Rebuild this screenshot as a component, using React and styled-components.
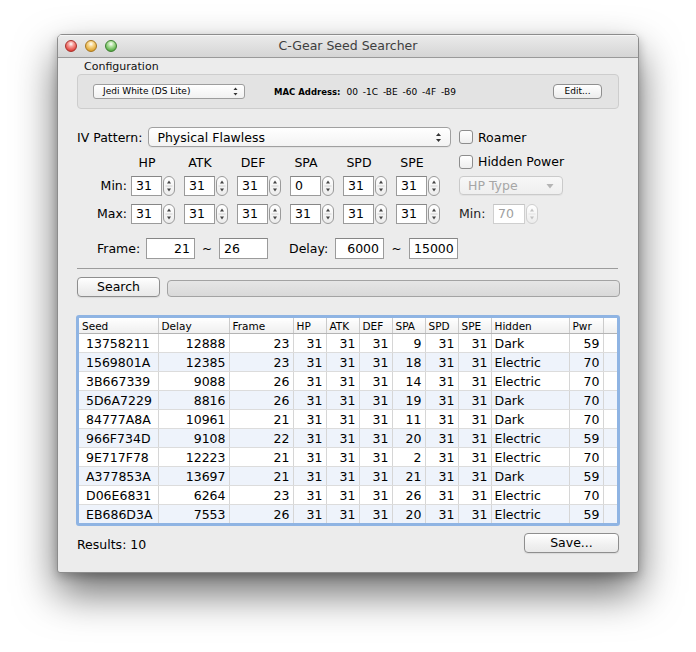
import React from 'react';
import styled, { createGlobalStyle } from 'styled-components';

const Global = createGlobalStyle`
  html, body { margin: 0; padding: 0; background: #ffffff; }
  body { font-family: "DejaVu Sans", "Noto Sans", sans-serif; color: #000; }
  #root { width: 696px; height: 652px; overflow: hidden; }
`;

const Window = styled.div`
  position: relative;
  margin: 34px 0 0 57px;
  width: 582px;
  height: 539px;
  box-sizing: border-box;
  background: #ececec;
  border: 1px solid #8c8c8c;
  border-radius: 5px 5px 3px 3px;
  box-shadow: 0 20px 42px rgba(0,0,0,0.58), 0 4px 10px rgba(0,0,0,0.22);
  display: flex;
  flex-direction: column;
  overflow: hidden;
`;

const TitleBar = styled.div`
  height: 22px;
  flex: 0 0 22px;
  display: flex;
  align-items: center;
  position: relative;
  background: linear-gradient(#ebebeb, #d5d5d5);
  border-bottom: 1px solid #9a9a9a;
  box-shadow: inset 0 1px 0 #f6f6f6;
`;

const Lights = styled.div`
  display: flex;
  gap: 8px;
  margin-left: 7px;
`;

const Light = styled.div`
  width: 12px;
  height: 12px;
  border-radius: 50%;
  box-sizing: border-box;
  border: 1px solid ${p => p.$edge};
  background: radial-gradient(circle at 50% 30%, #ffffff 0%, ${p => p.$light} 30%, ${p => p.$color} 75%, ${p => p.$edge} 100%);
`;

const Title = styled.div`
  position: absolute;
  left: 0; right: 0; top: 0; bottom: 0;
  text-align: center;
  font-size: 12.5px;
  line-height: 22px;
  color: #3e3e3e;
  pointer-events: none;
`;

const Content = styled.div`
  flex: 1;
  padding: 0 19px 0 19px;
  display: flex;
  flex-direction: column;
`;

const GroupLabel = styled.div`
  font-size: 11px;
  line-height: 14px;
  margin: 2px 0 0 7px;
  color: #111;
`;

const GroupBox = styled.div`
  margin-top: 0;
  height: 35px;
  box-sizing: border-box;
  border: 1px solid #cdcdcd;
  border-radius: 4px;
  background: #e3e3e3;
  display: flex;
  align-items: center;
  padding: 0 16px 0 15px;
`;

const MiniPopup = styled.div`
  width: 152px;
  height: 15px;
  box-sizing: border-box;
  border: 1px solid #9d9d9d;
  border-radius: 3px;
  background: linear-gradient(#ffffff, #f1f1f1);
  font-size: 9px;
  line-height: 13px;
  padding-left: 9px;
  display: flex;
  align-items: center;
  justify-content: space-between;
  padding-right: 6px;
`;

const MacLabel = styled.span`
  font-size: 8.5px;
  font-weight: bold;
  margin-left: 29px;
`;

const MacValue = styled.span`
  font-size: 9px;
  word-spacing: 2px;
  margin-left: 6px;
  flex: 1;
`;

const MiniButton = styled.div`
  width: 49px;
  height: 15px;
  box-sizing: border-box;
  border: 1px solid #8f8f8f;
  border-radius: 4px;
  background: linear-gradient(#ffffff, #ececec);
  font-size: 9px;
  line-height: 13px;
  text-align: center;
`;

const IVArea = styled.div`
  margin-top: 18px;
  display: grid;
  grid-template-columns: 374px 160px;
  column-gap: 8px;
`;

const LeftCol = styled.div`
  display: flex;
  flex-direction: column;
`;

const PatternRow = styled.div`
  display: flex;
  align-items: center;
  height: 20px;
`;

const Label = styled.span`
  font-size: 12.5px;
  white-space: nowrap;
  width: ${p => (p.$w ? `${p.$w}px` : 'auto')};
  flex: none;
`;

const Popup = styled.div`
  margin-left: ${p => p.$ml || 0}px;
  width: ${p => p.$w}px;
  height: ${p => p.$h || 20}px;
  box-sizing: border-box;
  border: 1px solid ${p => (p.$disabled ? '#cacaca' : '#a0a0a0')};
  border-radius: 4px;
  background: ${p => (p.$disabled ? 'linear-gradient(#f7f7f7, #efefef)' : 'linear-gradient(#ffffff, #f3f3f3)')};
  box-shadow: 0 1px 0 rgba(0,0,0,0.04);
  display: flex;
  align-items: center;
  justify-content: space-between;
  padding: 0 8px 0 8px;
  font-size: 12.5px;
  color: ${p => (p.$disabled ? '#a6a6a6' : '#000')};
`;

const StatGrid = styled.div`
  display: grid;
  grid-template-columns: 45px repeat(6, 44px);
  grid-template-rows: 29px 20px 28px;
  column-gap: 9px;
`;

const StatHeader = styled.div`
  font-size: 12.5px;
  text-align: center;
  align-self: center;
  padding-right: 12px;
  padding-top: 1px;
`;

const RowLabel = styled.div`
  font-size: 12.5px;
  text-align: right;
  align-self: ${p => (p.$end ? 'end' : 'center')};
  line-height: 20px;
  margin-right: -5px;
`;

const SpinGroup = styled.div`
  display: flex;
  gap: 1px;
  align-self: ${p => (p.$end ? 'end' : 'stretch')};
`;

const Field = styled.div`
  width: ${p => p.$w || 31}px;
  height: ${p => p.$h || 20}px;
  flex: none;
  box-sizing: border-box;
  background: #fff;
  border: 1px solid ${p => (p.$disabled ? '#cfcfcf' : '#9b9b9b')};
  border-top-color: ${p => (p.$disabled ? '#c4c4c4' : '#868686')};
  font-size: 12.5px;
  line-height: ${p => (p.$h || 20) - 2}px;
  padding: 0 4px;
  text-align: ${p => (p.$right ? 'right' : 'left')};
  color: ${p => (p.$disabled ? '#a0a0a0' : '#000')};
`;

const StepperBox = styled.div`
  width: 12px;
  height: 20px;
  box-sizing: border-box;
  border: 1px solid ${p => (p.$disabled ? '#cfcfcf' : '#9a9a9a')};
  border-radius: 6px;
  background: linear-gradient(#ffffff, #ececec);
  display: flex;
  align-items: center;
  justify-content: center;
`;

const Stepper = ({ disabled }) => (
  <StepperBox $disabled={disabled}>
    <svg width="10" height="18" viewBox="0 0 10 18">
      <path d="M5 3.5 L7 6.5 L3 6.5 Z" fill={disabled ? '#c2c2c2' : '#444'} />
      <path d="M1.5 9 L8.5 9" stroke={disabled ? '#e3e3e3' : '#d2d2d2'} strokeWidth="1" />
      <path d="M5 14.5 L7 11.5 L3 11.5 Z" fill={disabled ? '#c2c2c2' : '#444'} />
    </svg>
  </StepperBox>
);

const Spin = ({ value, end }) => (
  <SpinGroup $end={end}>
    <Field>{value}</Field>
    <Stepper />
  </SpinGroup>
);

const RightCol = styled.div`
  display: grid;
  grid-template-rows: 20px 29px 20px 28px;
`;

const CheckRow = styled.div`
  display: flex;
  align-items: center;
  gap: 5px;
`;

const Check = styled.div`
  width: 14px;
  height: 14px;
  box-sizing: border-box;
  border: 1px solid #8d8d8d;
  border-radius: 3px;
  background: linear-gradient(#ffffff, #eeeeee);
`;

const MinRow = styled.div`
  display: flex;
  align-items: flex-end;
  gap: 1px;
`;

const MinLabel = styled.span`
  font-size: 12.5px;
  line-height: 20px;
  width: 33px;
  color: #222;
`;

const FrameRow = styled.div`
  margin-top: 14px;
  display: flex;
  align-items: center;
  padding-left: 20px;
  height: 21px;
`;

const Tilde = styled.span`
  font-size: 12px;
  width: ${p => p.$w}px;
  text-align: center;
  flex: none;
`;

const Separator = styled.div`
  margin-top: 9px;
  height: 1px;
  background: #9c9c9c;
  margin-right: 1px;
`;

const SearchRow = styled.div`
  margin-top: 8px;
  display: flex;
  align-items: center;
  gap: 7px;
  height: 20px;
`;

const PushButton = styled.div`
  width: ${p => p.$w}px;
  height: 20px;
  box-sizing: border-box;
  border: 1px solid #8e8e8e;
  border-radius: 4px;
  background: linear-gradient(#ffffff, #f0f0f0 60%, #e9e9e9);
  box-shadow: 0 1px 1px rgba(0,0,0,0.08);
  font-size: 12.5px;
  line-height: 18px;
  text-align: center;
`;

const Progress = styled.div`
  flex: 1;
  height: 17px;
  margin-top: 3px;
  box-sizing: border-box;
  border: 1px solid #a3a3a3;
  border-radius: 4px;
  background: linear-gradient(#e6e6e6, #d9d9d9);
  margin-right: -1px;
`;

const TableFrame = styled.div`
  margin: 18px -1px 0 -1px;
  height: 211px;
  box-sizing: border-box;
  border: 3px solid #8fb4e3;
  border-radius: 3px;
  background: #fff;
  overflow: hidden;
`;

const Table = styled.table`
  width: 538px;
  table-layout: fixed;
  border-collapse: collapse;
`;

const Th = styled.th`
  height: 15px;
  padding: 0 0 0 3px;
  font-size: 10.5px;
  font-weight: normal;
  text-align: left;
  background: linear-gradient(#ffffff, #efefef);
  border-bottom: 1px solid #b4b4b4;
  border-right: 1px solid #cbcbcb;
  white-space: nowrap;
  overflow: hidden;
  &:last-child { border-right: none; }
`;

const Tr = styled.tr`
  background: ${p => (p.$alt ? '#eef3fb' : '#ffffff')};
`;

const Td = styled.td`
  height: 16px;
  padding: 2px ${p => (p.$left ? 0 : 3)}px 0 ${p => (p.$left ? p.$pl : 0)}px;
  font-size: 12.5px;
  line-height: 16px;
  text-align: ${p => (p.$left ? 'left' : 'right')};
  border-right: 1px solid #d6d6d6;
  border-bottom: 1px solid #dcdcdc;
  white-space: nowrap;
  overflow: hidden;
  &:last-child { border-right: none; }
`;

const Footer = styled.div`
  margin-top: 7px;
  display: flex;
  align-items: center;
  justify-content: space-between;
  height: 20px;
`;

const ResultText = styled.span`
  font-size: 12.5px;
  margin-top: 2px;
`;

const DoubleArrow = ({ color = '#333' }) => (
  <svg width="7" height="11" viewBox="0 0 7 11">
    <path d="M3.5 1 L6 4 L1 4 Z" fill={color} />
    <path d="M3.5 10 L6 7 L1 7 Z" fill={color} />
  </svg>
);

const MiniArrow = () => (
  <svg width="5" height="9" viewBox="0 0 5 9">
    <path d="M2.5 0.5 L4.5 3 L0.5 3 Z" fill="#333" />
    <path d="M2.5 8.5 L4.5 6 L0.5 6 Z" fill="#333" />
  </svg>
);

const DownArrow = () => (
  <svg width="8" height="6" viewBox="0 0 8 6">
    <path d="M0.5 1 L7.5 1 L4 5.5 Z" fill="#b5b5b5" />
  </svg>
);

const cols = [
  { name: 'Seed', w: 79, left: true, pl: 7 },
  { name: 'Delay', w: 71 },
  { name: 'Frame', w: 64 },
  { name: 'HP', w: 33 },
  { name: 'ATK', w: 33 },
  { name: 'DEF', w: 33 },
  { name: 'SPA', w: 33 },
  { name: 'SPD', w: 33 },
  { name: 'SPE', w: 33 },
  { name: 'Hidden', w: 78, left: true, pl: 3 },
  { name: 'Pwr', w: 34 },
  { name: '', w: 14 },
];

const rows = [
  ['13758211', 12888, 23, 31, 31, 31, 9, 31, 31, 'Dark', 59],
  ['1569801A', 12385, 23, 31, 31, 31, 18, 31, 31, 'Electric', 70],
  ['3B667339', 9088, 26, 31, 31, 31, 14, 31, 31, 'Electric', 70],
  ['5D6A7229', 8816, 26, 31, 31, 31, 19, 31, 31, 'Dark', 70],
  ['84777A8A', 10961, 21, 31, 31, 31, 11, 31, 31, 'Dark', 70],
  ['966F734D', 9108, 22, 31, 31, 31, 20, 31, 31, 'Electric', 59],
  ['9E717F78', 12223, 21, 31, 31, 31, 2, 31, 31, 'Electric', 70],
  ['A377853A', 13697, 21, 31, 31, 31, 21, 31, 31, 'Dark', 59],
  ['D06E6831', 6264, 23, 31, 31, 31, 26, 31, 31, 'Electric', 70],
  ['EB686D3A', 7553, 26, 31, 31, 31, 20, 31, 31, 'Electric', 59],
];

const stats = ['HP', 'ATK', 'DEF', 'SPA', 'SPD', 'SPE'];
const minVals = ['31', '31', '31', '0', '31', '31'];
const maxVals = ['31', '31', '31', '31', '31', '31'];

export default function App() {
  return (
    <>
      <Global />
      <Window>
        <TitleBar>
          <Lights>
            <Light $color="#e2463f" $light="#f7a09a" $edge="#a8302a" />
            <Light $color="#e0a634" $light="#f8d88e" $edge="#a87720" />
            <Light $color="#5cb14a" $light="#b5e3a3" $edge="#3d7f30" />
          </Lights>
          <Title>C-Gear Seed Searcher</Title>
        </TitleBar>
        <Content>
          <GroupLabel>Configuration</GroupLabel>
          <GroupBox>
            <MiniPopup>
              <span>Jedi White (DS Lite)</span>
              <MiniArrow />
            </MiniPopup>
            <MacLabel>MAC Address:</MacLabel>
            <MacValue>00 -1C -BE -60 -4F -B9</MacValue>
            <MiniButton>Edit...</MiniButton>
          </GroupBox>

          <IVArea>
            <LeftCol>
              <PatternRow>
                <Label>IV Pattern:</Label>
                <Popup $ml={6} $w={303}>
                  <span>Physical Flawless</span>
                  <DoubleArrow />
                </Popup>
              </PatternRow>
              <StatGrid>
                <div />
                {stats.map(s => (
                  <StatHeader key={s}>{s}</StatHeader>
                ))}
                <RowLabel>Min:</RowLabel>
                {minVals.map((v, i) => (
                  <Spin key={'min' + i} value={v} />
                ))}
                <RowLabel $end>Max:</RowLabel>
                {maxVals.map((v, i) => (
                  <Spin key={'max' + i} value={v} end />
                ))}
              </StatGrid>
            </LeftCol>
            <RightCol>
              <CheckRow>
                <Check />
                <Label>Roamer</Label>
              </CheckRow>
              <CheckRow>
                <Check />
                <Label>Hidden Power</Label>
              </CheckRow>
              <Popup $w={104} $h={19} $disabled>
                <span>HP Type</span>
                <DownArrow />
              </Popup>
              <MinRow>
                <MinLabel>Min:</MinLabel>
                <Field $disabled $w={32}>70</Field>
                <Stepper disabled />
              </MinRow>
            </RightCol>
          </IVArea>

          <FrameRow>
            <Label $w={49}>Frame:</Label>
            <Field $right $w={49} $h={21}>21</Field>
            <Tilde $w={24}>~</Tilde>
            <Field $w={49} $h={21}>26</Field>
            <Label $w={46} style={{ marginLeft: 21 }}>Delay:</Label>
            <Field $right $w={49} $h={21}>6000</Field>
            <Tilde $w={25}>~</Tilde>
            <Field $w={49} $h={21}>15000</Field>
          </FrameRow>

          <Separator />

          <SearchRow>
            <PushButton $w={83}>Search</PushButton>
            <Progress />
          </SearchRow>

          <TableFrame>
            <Table>
              <colgroup>
                {cols.map((c, i) => (
                  <col key={i} style={{ width: c.w }} />
                ))}
              </colgroup>
              <thead>
                <tr>
                  {cols.map((c, i) => (
                    <Th key={i}>{c.name}</Th>
                  ))}
                </tr>
              </thead>
              <tbody>
                {rows.map((r, ri) => (
                  <Tr key={ri} $alt={ri % 2 === 1}>
                    {r.map((v, ci) => (
                      <Td key={ci} $left={cols[ci].left} $pl={cols[ci].pl}>{v}</Td>
                    ))}
                    <Td />
                  </Tr>
                ))}
              </tbody>
            </Table>
          </TableFrame>

          <Footer>
            <ResultText>Results: 10</ResultText>
            <PushButton $w={95}>Save...</PushButton>
          </Footer>
        </Content>
      </Window>
    </>
  );
}
